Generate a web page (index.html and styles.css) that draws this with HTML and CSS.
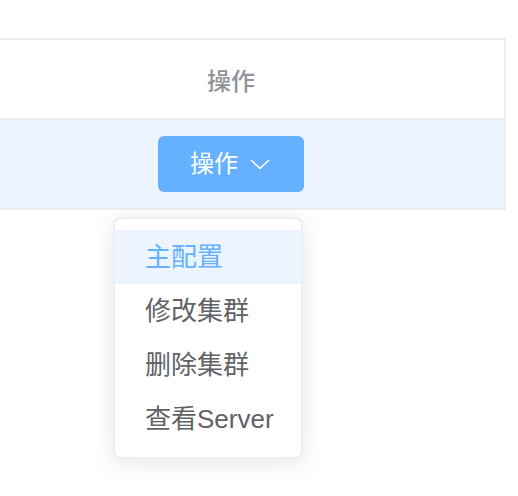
FILE: index.html
```html
<!DOCTYPE html>
<html lang="zh-CN">
<head>
<meta charset="utf-8">
<title>操作</title>
<link rel="stylesheet" href="styles.css">
</head>
<body>
<div class="table">
  <div class="row head">
    <div class="cell">操作</div>
  </div>
  <div class="row body">
    <div class="cell">
      <button class="btn">
        <span>操作</span>
        <svg class="chev" width="24" height="24" viewBox="0 0 24 24"><path d="M3 8 L12 16.5 L21 8" fill="none" stroke="#ffffff" stroke-width="1.6" stroke-linejoin="round"/></svg>
      </button>
    </div>
  </div>
</div>
<ul class="menu">
  <li class="item active">主配置</li>
  <li class="item">修改集群</li>
  <li class="item">删除集群</li>
  <li class="item">查看Server</li>
</ul>
</body>
</html>
```
FILE: styles.css
```css
html, body {
  margin: 0;
  padding: 0;
  background: #ffffff;
}
body {
  width: 518px;
  height: 496px;
  position: relative;
  overflow: hidden;
  font-family: "Liberation Sans", "Noto Sans CJK SC", sans-serif;
}
.table {
  margin-top: 38px;
  width: 504px;
  border-top: 2px solid #ebeef5;
  border-right: 2px solid #ebeef5;
}
.row {
  border-bottom: 2px solid #ebeef5;
}
.cell {
  display: flex;
  align-items: center;
  justify-content: center;
  padding-right: 42px;
}
.head .cell {
  height: 78px;
  font-size: 24px;
  font-weight: 500;
  color: #909399;
}
.body {
  background: #ecf5ff;
}
.body .cell {
  height: 88px;
}
.btn {
  display: flex;
  align-items: center;
  height: 56px;
  width: 146px;
  box-sizing: border-box;
  padding: 0 32px;
  border: none;
  border-radius: 6px;
  background: #66b1ff;
  color: #ffffff;
  font-family: "Liberation Sans", "Noto Sans CJK SC", sans-serif;
  font-size: 24px;
  line-height: 1;
}
.chev {
  margin-left: 10px;
  display: block;
}
.menu {
  position: absolute;
  left: 113px;
  top: 217px;
  width: 190px;
  box-sizing: border-box;
  margin: 0;
  padding: 11px 0;
  list-style: none;
  background: #ffffff;
  border: 2px solid #ebeef5;
  border-radius: 8px;
  box-shadow: 0 4px 24px 0 rgba(0, 0, 0, 0.1);
}
.item {
  height: 54px;
  line-height: 54px;
  padding: 0 30px;
  font-size: 26px;
  color: #606266;
  white-space: nowrap;
}
.item.active {
  background: #ecf5ff;
  color: #66b1ff;
}
```
